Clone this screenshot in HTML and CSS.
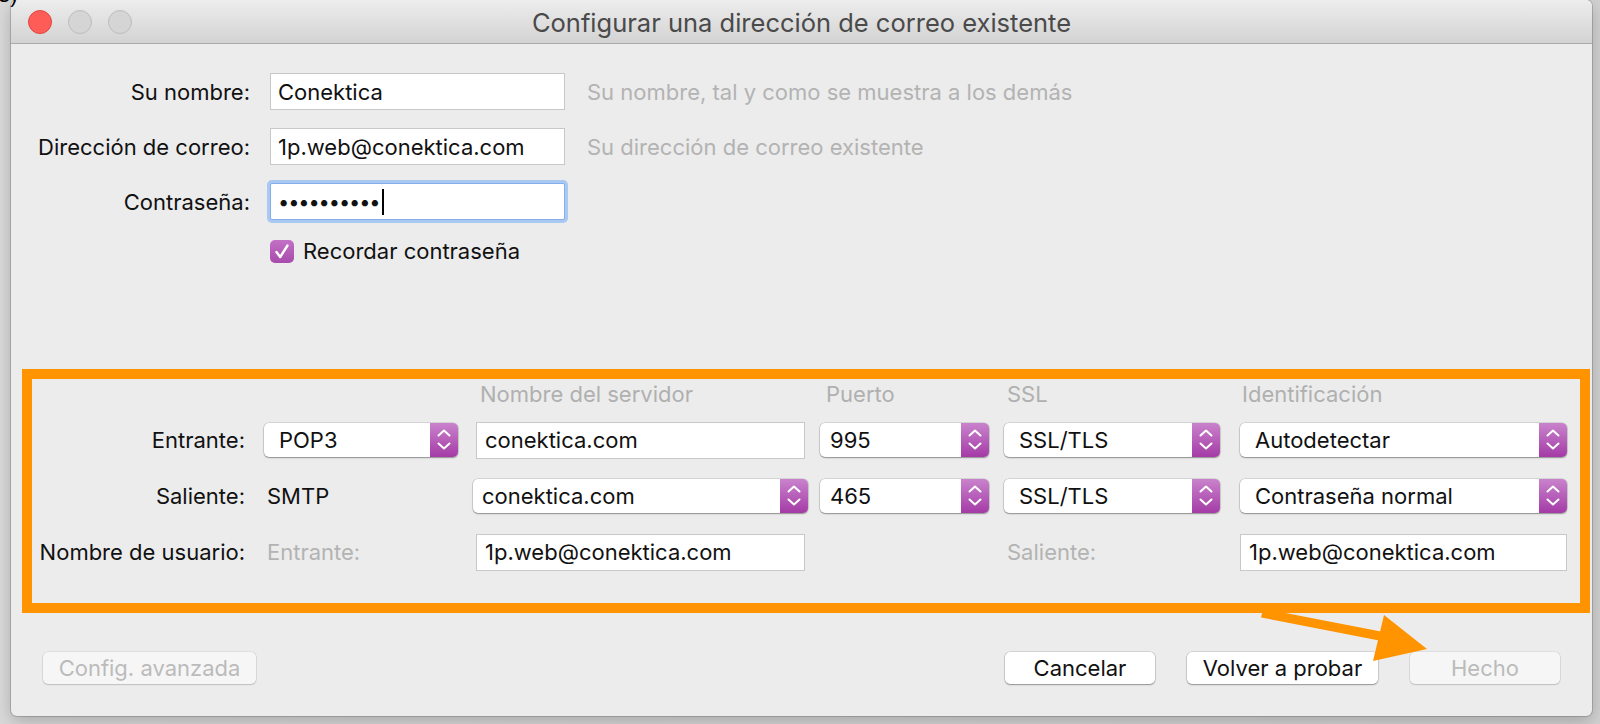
FILE: index.html
```html
<!DOCTYPE html>
<html lang="es">
<head>
<meta charset="utf-8">
<title>Configurar una dirección de correo existente</title>
<link rel="stylesheet" href="styles.css">
</head>
<body>
<span class="frag">3)</span>
<div class="window">
  <div class="titlebar">
    <div class="lights"><span class="light close"></span><span class="light"></span><span class="light"></span></div>
    <div class="title">Configurar una dirección de correo existente</div>
    <div></div>
  </div>

  <div class="form">
    <div class="lbl">Su nombre:</div>
    <div class="field">Conektica</div>
    <div class="hint">Su nombre, tal y como se muestra a los demás</div>

    <div class="lbl">Dirección de correo:</div>
    <div class="field">1p.web@conektica.com</div>
    <div class="hint">Su dirección de correo existente</div>

    <div class="lbl">Contraseña:</div>
    <div class="field focus"><span class="dots">••••••••••</span><span class="caret"></span></div>
    <div></div>

    <div class="check-row">
      <span class="checkbox"><svg viewBox="0 0 24 23" width="24" height="23"><path d="M6.5 12 L10.2 17 L17.5 5.5" fill="none" stroke="#fff" stroke-width="2.4" stroke-linecap="round" stroke-linejoin="round"/></svg></span>
      <span class="check-label">Recordar contraseña</span>
    </div>
  </div>

  <div class="server">
    <div></div>
    <div></div>
    <div class="head">Nombre del servidor</div>
    <div class="head">Puerto</div>
    <div class="head">SSL</div>
    <div class="head">Identificación</div>

    <div class="lbl2">Entrante:</div>
    <div class="select w194"><span class="val">POP3</span><span class="arr"><svg viewBox="0 0 28 34" width="28" height="34"><path d="M8.5 12.5 L14 7.5 L19.5 12.5 M8.5 20.5 L14 25.5 L19.5 20.5" fill="none" stroke="#fff" stroke-width="2" stroke-linecap="round" stroke-linejoin="round"/></svg></span></div>
    <div class="field w329 pad8">conektica.com</div>
    <div class="select w169"><span class="val p10">995</span><span class="arr"><svg viewBox="0 0 28 34" width="28" height="34"><path d="M8.5 12.5 L14 7.5 L19.5 12.5 M8.5 20.5 L14 25.5 L19.5 20.5" fill="none" stroke="#fff" stroke-width="2" stroke-linecap="round" stroke-linejoin="round"/></svg></span></div>
    <div class="select w216"><span class="val">SSL/TLS</span><span class="arr"><svg viewBox="0 0 28 34" width="28" height="34"><path d="M8.5 12.5 L14 7.5 L19.5 12.5 M8.5 20.5 L14 25.5 L19.5 20.5" fill="none" stroke="#fff" stroke-width="2" stroke-linecap="round" stroke-linejoin="round"/></svg></span></div>
    <div class="select w327"><span class="val">Autodetectar</span><span class="arr"><svg viewBox="0 0 28 34" width="28" height="34"><path d="M8.5 12.5 L14 7.5 L19.5 12.5 M8.5 20.5 L14 25.5 L19.5 20.5" fill="none" stroke="#fff" stroke-width="2" stroke-linecap="round" stroke-linejoin="round"/></svg></span></div>

    <div class="lbl2">Saliente:</div>
    <div class="plain">SMTP</div>
    <div class="select w335 shift"><span class="val p9">conektica.com</span><span class="arr"><svg viewBox="0 0 28 34" width="28" height="34"><path d="M8.5 12.5 L14 7.5 L19.5 12.5 M8.5 20.5 L14 25.5 L19.5 20.5" fill="none" stroke="#fff" stroke-width="2" stroke-linecap="round" stroke-linejoin="round"/></svg></span></div>
    <div class="select w169"><span class="val p10">465</span><span class="arr"><svg viewBox="0 0 28 34" width="28" height="34"><path d="M8.5 12.5 L14 7.5 L19.5 12.5 M8.5 20.5 L14 25.5 L19.5 20.5" fill="none" stroke="#fff" stroke-width="2" stroke-linecap="round" stroke-linejoin="round"/></svg></span></div>
    <div class="select w216"><span class="val">SSL/TLS</span><span class="arr"><svg viewBox="0 0 28 34" width="28" height="34"><path d="M8.5 12.5 L14 7.5 L19.5 12.5 M8.5 20.5 L14 25.5 L19.5 20.5" fill="none" stroke="#fff" stroke-width="2" stroke-linecap="round" stroke-linejoin="round"/></svg></span></div>
    <div class="select w327"><span class="val">Contraseña normal</span><span class="arr"><svg viewBox="0 0 28 34" width="28" height="34"><path d="M8.5 12.5 L14 7.5 L19.5 12.5 M8.5 20.5 L14 25.5 L19.5 20.5" fill="none" stroke="#fff" stroke-width="2" stroke-linecap="round" stroke-linejoin="round"/></svg></span></div>

    <div class="lbl2">Nombre de usuario:</div>
    <div class="plain muted">Entrante:</div>
    <div class="field w329 pad8">1p.web@conektica.com</div>
    <div></div>
    <div class="plain muted">Saliente:</div>
    <div class="field w327 pad8">1p.web@conektica.com</div>
  </div>

  <div class="buttons">
    <div class="btn disabled w213">Config. avanzada</div>
    <div class="btn-group">
      <div class="btn w150">Cancelar</div>
      <div class="btn w191">Volver a probar</div>
      <div class="btn disabled w150">Hecho</div>
    </div>
  </div>
</div>

<svg class="arrow" viewBox="0 0 1600 724" width="1600" height="724">
  <polygon points="1262.9,608.6 1380.9,631.6 1379.1,640.4 1261.1,617.4" fill="#ff9400"/>
  <polygon points="1384,615 1427,649 1373,661" fill="#ff9400"/>
</svg>
</body>
</html>
```

FILE: styles.css
```css
* { box-sizing: border-box; }

html, body {
  margin: 0;
  padding: 0;
}

body {
  width: 1600px;
  height: 724px;
  overflow: hidden;
  position: relative;
  background: linear-gradient(90deg, #dadada, #d2d2d2);
  font-family: Inter, "Liberation Sans", sans-serif;
  font-size: 22px;
  color: #111;
}

.frag {
  position: absolute;
  left: -2px;
  top: -17px;
  font: 22px/24px "Liberation Sans", sans-serif;
  color: #000;
}

.window {
  margin-left: 11px;
  width: 1581px;
  height: 716px;
  background: #ececec;
  border-radius: 6px;
  box-shadow: 0 0 0 1px rgba(0, 0, 0, 0.16), 0 6px 18px rgba(0, 0, 0, 0.22);
  display: flex;
  flex-direction: column;
  overflow: hidden;
}

/* Title bar */
.titlebar {
  height: 44px;
  flex: none;
  background: linear-gradient(#ededed, #d3d3d3);
  border-bottom: 1px solid #ababab;
  display: grid;
  grid-template-columns: 1fr auto 1fr;
  align-items: center;
}

.lights {
  display: flex;
  gap: 16px;
  padding-left: 17px;
}

.light {
  width: 24px;
  height: 24px;
  border-radius: 50%;
  background: #d5d5d5;
  border: 1px solid #bdbdbd;
}

.light.close {
  background: #fd5d56;
  border-color: #e1463f;
}

.title {
  font-size: 25.5px;
  color: #4a4a4a;
  padding-top: 2px;
}

/* Upper form */
.form {
  display: grid;
  grid-template-columns: 239px 295px auto;
  grid-auto-rows: 37px;
  column-gap: 20px;
  row-gap: 18px;
  padding-top: 29px;
  align-items: center;
}

.lbl {
  text-align: right;
  white-space: nowrap;
}

.field {
  height: 37px;
  background: #fff;
  border: 1px solid #c8c8c8;
  padding-left: 7px;
  display: flex;
  align-items: center;
  white-space: nowrap;
}

.field.focus {
  border-color: #86aeea;
  box-shadow: 0 0 0 3px #a9c8f2;
  border-radius: 2px;
}

.dots {
  font-size: 20px;
  letter-spacing: -1.1px;
}

.caret {
  width: 2px;
  height: 26px;
  background: #000;
  margin-left: 2px;
}

.hint {
  color: #b3b3b3;
  margin-left: 2px;
  white-space: nowrap;
}

.check-row {
  grid-column: 2 / span 2;
  align-self: start;
  display: flex;
  align-items: center;
  gap: 9px;
  margin-top: 1px;
  height: 24px;
}

.checkbox {
  width: 24px;
  height: 23px;
  border-radius: 5px;
  background: linear-gradient(#c271c5, #a84bad);
  display: flex;
}

/* Server section */
.server {
  margin: 94px 0 0 11px;
  width: 1568px;
  height: 244px;
  border: 10px solid #ff9400;
  padding: 6px 0 32px;
  display: grid;
  grid-template-columns: 232px 212px 344px 184px 236px 340px;
  grid-template-rows: 18px 38px 38px 38px;
  row-gap: 18px;
  align-items: center;
}

.head {
  color: #b0b0b0;
  padding-left: 4px;
  white-space: nowrap;
}

.head:nth-child(4) { padding-left: 6px; }
.head:nth-child(5) { padding-left: 3px; }
.head:nth-child(6) { padding-left: 2px; }

.lbl2 {
  text-align: right;
  padding-right: 19px;
  white-space: nowrap;
}

.plain {
  padding-left: 3px;
  white-space: nowrap;
}

.muted {
  color: #b3b3b3;
}

.field.pad8 { padding-left: 8px; }

.select {
  height: 34px;
  background: #fff;
  border-radius: 5px;
  box-shadow: 0 0 0 0.5px rgba(0, 0, 0, 0.2), 0 1px 1.5px rgba(0, 0, 0, 0.32);
  display: flex;
  align-items: center;
  overflow: hidden;
  white-space: nowrap;
}

.select .val {
  flex: 1;
  padding-left: 15px;
}

.select .val.p10 { padding-left: 10px; }
.select .val.p9 { padding-left: 9px; }

.select .arr {
  width: 28px;
  height: 100%;
  flex: none;
  background: linear-gradient(#c983cc, #a43ba6);
  display: flex;
}

.select.shift { margin-left: -3px; }

.w169 { width: 169px; }
.w194 { width: 194px; }
.w216 { width: 216px; }
.w327 { width: 327px; }
.w329 { width: 329px; }
.w335 { width: 335px; }
.w150 { width: 150px; }
.w191 { width: 191px; }
.w213 { width: 213px; }

/* Buttons */
.buttons {
  margin-top: 39px;
  padding: 0 32px;
  display: flex;
  justify-content: space-between;
}

.btn-group {
  display: flex;
  gap: 32px;
}

.btn {
  height: 32px;
  background: #fff;
  border-radius: 5px;
  box-shadow: 0 0 0 0.5px rgba(0, 0, 0, 0.2), 0 1px 1.5px rgba(0, 0, 0, 0.3);
  display: flex;
  align-items: center;
  justify-content: center;
  white-space: nowrap;
}

.btn.disabled {
  background: #f6f6f6;
  color: #bbbbbb;
  box-shadow: 0 0 0 0.5px rgba(0, 0, 0, 0.12), 0 1px 1.5px rgba(0, 0, 0, 0.14);
}

.arrow {
  position: absolute;
  left: 0;
  top: 0;
  pointer-events: none;
}
```
